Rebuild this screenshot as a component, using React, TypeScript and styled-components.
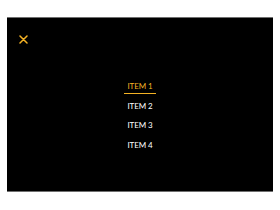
import styled, { createGlobalStyle } from "styled-components";

const GlobalStyle = createGlobalStyle`
  body {
    margin: 0;
    background: #fff;
    font-family: Lato, "Liberation Sans", sans-serif;
  }
`;

const Page = styled.div`
  padding: 17px 7px 18px;
`;

const Overlay = styled.nav`
  position: relative;
  box-sizing: border-box;
  height: 175px;
  background: #000;
  border-top: 1px solid #6f6f6f;
  border-bottom: 1px solid #6f6f6f;
  display: flex;
  flex-direction: column;
  align-items: center;
  padding-top: 63px;
`;

const CloseButton = styled.button`
  position: absolute;
  top: 14px;
  left: 9px;
  width: 14px;
  height: 14px;
  padding: 0;
  border: none;
  background: transparent;
  display: flex;
  align-items: center;
  justify-content: center;
  cursor: pointer;
`;

const MenuList = styled.ul`
  list-style: none;
  margin: 0;
  padding: 0;
  display: flex;
  flex-direction: column;
  align-items: center;
  gap: 6.7px;
`;

const MenuLink = styled.a<{ $active?: boolean }>`
  display: block;
  padding: 0 3px 2px;
  font-size: 8px;
  line-height: 10px;
  letter-spacing: -0.1px;
  text-decoration: none;
  color: ${(p) => (p.$active ? "#f4b224" : "#fff")};
  border-bottom: 1px solid ${(p) => (p.$active ? "#f4b224" : "transparent")};
`;

const items = ["ITEM 1", "ITEM 2", "ITEM 3", "ITEM 4"];

function App() {
  return (
    <Page>
      <GlobalStyle />
      <Overlay>
        <CloseButton aria-label="Close">
          <svg width="9" height="9" viewBox="0 0 9 9">
            <path d="M1 1 L8 8 M8 1 L1 8" stroke="#f4b224" strokeWidth="1.5" strokeLinecap="round" />
          </svg>
        </CloseButton>
        <MenuList>
          {items.map((item, i) => (
            <li key={item}>
              <MenuLink href="#" $active={i === 0}>
                {item}
              </MenuLink>
            </li>
          ))}
        </MenuList>
      </Overlay>
    </Page>
  );
}

export default App;
